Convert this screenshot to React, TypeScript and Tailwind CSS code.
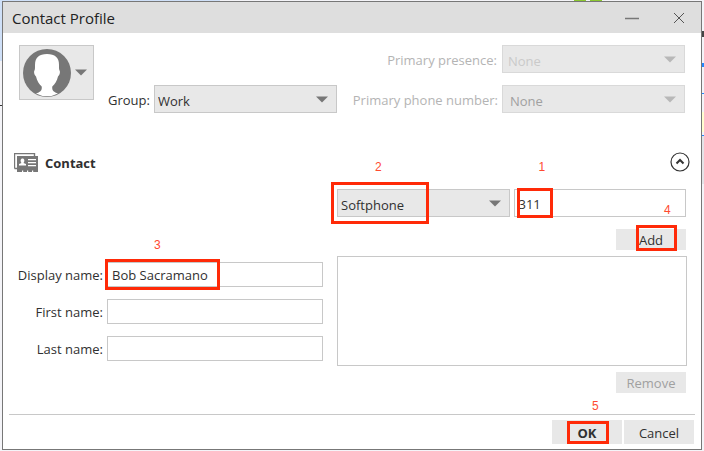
import { useState, type ReactNode } from "react";

function Arrow({ className }: { className: string }) {
  return (
    <svg viewBox="0 0 12 7" className={`pointer-events-none h-[7px] w-3 shrink-0 ${className}`} aria-hidden="true">
      <path d="M0 0.5h12L6 6.5z" fill="currentColor" />
    </svg>
  );
}

type DropProps = { id: string; label?: string; value: string; disabled?: boolean; className: string; tone: string; arrow: string };

function Drop({ id, label, value, disabled, className, tone, arrow }: DropProps) {
  return (
    <div className={`flex h-7 items-center border bg-[#e8e8e8] ${className}`}>
      <select
        id={id}
        aria-label={label}
        disabled={disabled}
        defaultValue={value}
        className={`-mr-5 h-full w-full min-w-0 appearance-none bg-transparent pt-1 pr-5 opacity-100 outline-none ${tone}`}
      >
        <option>{value}</option>
      </select>
      <Arrow className={`mr-1.5 ${arrow}`} />
    </div>
  );
}

function Mark({ box, children, num }: { box: string; num: string; children: ReactNode }) {
  return (
    <>
      <span className={`pointer-events-none absolute border-[3px] border-[#ff2a08] ${box}`} />
      <span className={`pointer-events-none absolute font-['Liberation_Sans',Arial,sans-serif] text-xs leading-3 text-[#ff4a30] ${num}`}>
        {children}
      </span>
    </>
  );
}

function Field({ id, label, value = "", children }: { id: string; label: string; value?: string; children?: ReactNode }) {
  return (
    <div className="flex items-center gap-1">
      <label htmlFor={id} className="w-[94px] shrink-0 text-right whitespace-nowrap">{label}</label>
      <div className="relative min-w-0 flex-1">
        <input id={id} defaultValue={value} className="block h-[25px] w-full border border-[#c8c8c8] bg-white px-1 outline-none" />
        {children}
      </div>
    </div>
  );
}

export default function App() {
  const [open, setOpen] = useState(true);
  return (
    <div className="grid min-h-screen grid-cols-[2px_1fr_2px] grid-rows-[1px_1fr_1px] bg-[#f4f4f8] font-['Open_Sans','Noto_Sans',sans-serif] text-[13px] leading-5 text-[#303030]">
      <div className="col-span-3 flex">
        <div className="w-[220px] bg-[#cfe0f8]" />
        <div className="ml-[354px] w-3 bg-[#8cc832]" />
        <div className="ml-1 w-3 bg-[#8cc832]" />
      </div>
      <div className="flex flex-col">
        <div className="h-[60px] bg-[#cfe0f8]" />
        <div className="mt-11 h-px bg-[#333333]" />
      </div>

      <main className="flex flex-col border border-[#777777] bg-white">
        <header className="flex h-[31px] items-center bg-[#dedede] pl-[9px] text-[#222222]">
          <h1 className="flex-1 text-[15px]">Contact Profile</h1>
          <button type="button" aria-label="Minimize" className="flex h-full w-[50px] items-center justify-center">
            <svg viewBox="0 0 16 16" className="size-4"><path d="M1 8.500h14" stroke="#777777" strokeWidth="1.500" /></svg>
          </button>
          <button type="button" aria-label="Close" className="flex h-full w-11 items-center justify-center">
            <svg viewBox="0 0 12 12" className="size-3"><path d="M1 1l10 10M11 1L1 11" stroke="#555555" strokeWidth="1" /></svg>
          </button>
        </header>

        <section className="flex px-4 pt-3">
          <button type="button" aria-label="Change picture" className="flex h-[55px] w-[75px] items-center gap-1 border border-[#c8c8c8] bg-[#e8e8e8] pl-[3px]">
            <svg viewBox="0 0 48 48" className="size-12">
              <circle cx="24" cy="24" r="24" fill="#777777" />
              <path d="M24 5C16 5 12 8.500 12 16c0 2 .1 3.500-.3 5-1.300 1.500-.5 5 1.300 6.500 1 4.500 3 7.500 5.700 10 .5 4-1 5.500-5.700 7a24 24 0 0 0 22 0c-4.700-1.500-6.200-3-5.700-7 2.700-2.500 4.700-5.500 5.700-10 1.800-1.500 2.600-5 1.300-6.500C35.900 19.500 36 18 36 16c0-7.500-4-11-12-11z" fill="#ffffff" />
            </svg>
            <Arrow className="text-[#777777]" />
          </button>
          <div className="ml-[14px] flex items-center gap-1 self-end pt-10">
            <label htmlFor="group" className="pt-0.5">Group:</label>
            <Drop id="group" value="Work" className="w-[183px] border-[#c8c8c8] pl-[3px]" tone="text-[#303030]" arrow="text-[#777777]" />
          </div>
          <div className="ml-auto flex flex-col items-end gap-3 text-[#b4b4b4]">
            <div className="flex items-center gap-[5px]">
              <label htmlFor="presence" className="pt-0.5">Primary presence:</label>
              <Drop id="presence" value="None" disabled className="w-[183px] border-[#d9d9d9] pl-[5px]" tone="text-[#cacaca]" arrow="text-[#b8b8b8]" />
            </div>
            <div className="flex items-center gap-1">
              <label htmlFor="phone" className="pt-0.5">Primary phone number:</label>
              <Drop id="phone" value="None" disabled className="w-[183px] border-[#d9d9d9] pl-[7px]" tone="text-[#a0a0a0]" arrow="text-[#b8b8b8]" />
            </div>
          </div>
        </section>

        <div className="mt-[38px] flex items-center px-[11px]">
          <svg viewBox="0 0 24 19" className="h-[19px] w-6" aria-hidden="true">
            <path d="M.5 15.500V.5h20v2.500M.5 15.500H3" fill="none" stroke="#777777" strokeWidth="1.400" />
            <path d="M3 3h21v16H3z" fill="#777777" />
            <path d="M5 12.500V11l2.500-1C6 8 6.500 5.500 8.500 5.500s2.500 2.500 1 4.500l2.500 1v1.500zM14 6h8v1.200h-8zM14 9h8v1.200h-8zM14 12h8v1.200h-8zM8 17.500h1.200V19H8zM13 17.500h1.200V19H13zM18 17.500h1.200V19H18z" fill="#ffffff" />
          </svg>
          <h2 className="ml-[7px] flex-1 pt-0.5 font-bold">Contact</h2>
          <button type="button" aria-label="Collapse contact" aria-expanded={open} onClick={() => setOpen(!open)}>
            <svg viewBox="0 0 20 20" className="size-5">
              <circle cx="10" cy="10" r="9" fill="none" stroke="#333333" strokeWidth="1.200" />
              <path d="M6.500 11.500L10 8l3.500 3.500" fill="none" stroke="#333333" strokeWidth="2" />
            </svg>
          </button>
        </div>

        {open && (
          <section className="mt-4 flex gap-[14px] pr-[14px] pl-[6px]">
            <div className="flex min-w-0 flex-[314] flex-col gap-3 pt-[73px]">
              <Field id="display" label="Display name:" value="Bob Sacramano">
                <Mark box="top-[-3px] left-[-2px] h-[31px] w-[115px]" num="top-[-23px] left-[47px]">3</Mark>
              </Field>
              <Field id="first" label="First name:" />
              <Field id="last" label="Last name:" />
            </div>
            <div className="flex min-w-0 flex-[350] flex-col">
              <div className="flex gap-1 pr-px">
                <div className="relative flex-1">
                  <Drop id="kind" label="Number type" value="Softphone" className="border-[#c8c8c8] pl-[3px]" tone="text-[#303030]" arrow="text-[#777777]" />
                  <Mark box="top-[-7px] left-[-6px] h-[42px] w-[98px]" num="top-[-28px] left-[38px]">2</Mark>
                </div>
                <div className="relative flex-1">
                  <input aria-label="Number" defaultValue="311" className="block h-7 w-full border border-[#c8c8c8] bg-white pt-0.5 pl-1 outline-none" />
                  <Mark box="top-[-1px] left-[3px] h-[30px] w-9" num="top-[-28px] left-[25px]">1</Mark>
                </div>
              </div>
              <div className="relative mt-3 mr-px self-end">
                <button type="button" className="block h-[21px] w-[70px] bg-[#e8e8e8]">Add</button>
                <Mark box="top-[-4px] left-5 h-[26px] w-[41px]" num="top-[-25px] left-12">4</Mark>
              </div>
              <div role="listbox" aria-label="Numbers" className="mt-[6px] h-[110px] border border-[#c8c8c8]" />
              <button type="button" disabled className="mt-[6px] mr-px h-[21px] w-[70px] self-end bg-[#e8e8e8] text-[#a0a0a0]">Remove</button>
            </div>
          </section>
        )}

        <footer className="mx-[6px] mt-auto flex justify-end gap-0.5 border-t border-[#c8c8c8] pt-[5px] pr-px pb-[5px]">
          <div className="relative">
            <button type="button" className="h-6 w-[70px] bg-[#e8e8e8] pt-0.5 font-bold">OK</button>
            <Mark box="top-px left-[15px] h-[23px] w-[42px]" num="top-[-20px] left-10">5</Mark>
          </div>
          <button type="button" className="h-6 w-[70px] bg-[#e8e8e8] pt-0.5">Cancel</button>
        </footer>
      </main>

      <div className="flex flex-col">
        <div className="mt-[30px] h-[6px] bg-[#444444]" />
        <div className="mt-[26px] h-1 bg-[#2288ff]" />
        <div className="mt-[26px] h-px bg-[#2288ff]" />
        <div className="mt-[18px] h-5 bg-[#ffffd0]" />
        <div className="mt-[3px] h-px bg-[#2288ff]" />
        <div className="h-12 bg-[#e4e4e8]" />
      </div>
    </div>
  );
}
